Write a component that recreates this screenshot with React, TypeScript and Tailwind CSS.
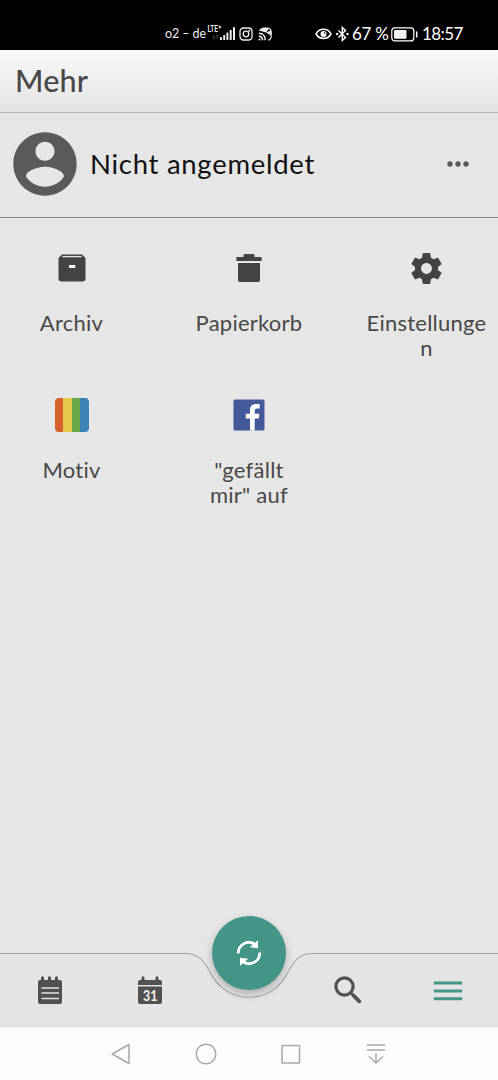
import type { ReactNode } from 'react';

function Cell({ icon, label }: { icon: ReactNode; label: string }) {
  return (
    <div className="flex h-[147px] flex-col items-center">
      <div className="flex h-[40px] w-full items-center justify-center">{icon}</div>
      <div className="mt-[22px] w-full text-center text-[22px] leading-[25px] tracking-[0.25px] break-words whitespace-pre-line text-[#484848]">{label}</div>
    </div>
  );
}

function StatusBar() {
  return (
    <div className="flex h-[50px] w-full items-center bg-black pt-[18px] pl-[165px] text-[#ececec]">
      <span className="w-[42px] text-[12.5px] leading-[30px] tracking-[-0.1px] whitespace-nowrap">o2 – de</span>
      <svg width="29" height="18" viewBox="0 0 29 18" className="-mt-[2px]" fill="#ececec">
        <text x="0.5" y="8.2" fontSize="9.500" fontWeight="700" textLength="10.5" lengthAdjust="spacingAndGlyphs">LTE</text>
        <path d="M11.400 3h3M12.900 1.500v3" stroke="#ececec" strokeWidth="1" />
        <path d="M7 11v4l-1-1.400M10 15v-4l1 1.400" stroke="#555" strokeWidth="0.800" fill="none" />
        <rect x="13" y="13" width="2" height="3" rx="0.600" />
        <rect x="16.200" y="11" width="2" height="5" rx="0.600" />
        <rect x="19.400" y="8.500" width="2" height="7.500" rx="0.600" />
        <rect x="22.700" y="6" width="2" height="10" rx="0.600" />
        <rect x="26" y="3" width="2" height="13" rx="0.600" />
      </svg>
      <svg width="14" height="14" viewBox="0 0 14 14" className="ml-[3px]" fill="none" stroke="#ececec" strokeWidth="1.300">
        <rect x="1" y="1" width="12" height="12" rx="3.400" />
        <circle cx="7" cy="7" r="2.800" />
        <circle cx="10.300" cy="3.800" r="0.400" />
      </svg>
      <svg width="14" height="14" viewBox="0 0 14 14" className="ml-[5px]">
        <path d="M4.500 1H9c3 0 4.200 1.500 4.200 4v4c0 2.200-1.200 3.800-3.200 4.100" stroke="#ececec" strokeWidth="1.200" fill="none" />
        <path d="M1 3.600Q2 1 4.500.9L11.500.9 8 5.400zM8 5.400L13 3.200V8.600z" fill="#ececec" />
        <path d="M.8 6.300c4 0 6.500 2.800 6.500 6.900M.8 9.300c2.400 0 3.800 1.500 3.800 3.900" fill="none" stroke="#ececec" strokeWidth="1.600" />
        <circle cx="1.500" cy="12.500" r="1" fill="#ececec" />
      </svg>
      <svg width="17" height="14" viewBox="0 0 17 14" className="ml-[43px]" fill="none" stroke="#fff" strokeWidth="1.500">
        <path d="M1 7C4.500.8 12.500.8 16 7 12.500 13 4.500 13 1 7z" />
        <circle cx="8.500" cy="7" r="3" fill="#fff" stroke="none" />
        <circle cx="9.500" cy="6" r="0.800" fill="#000" stroke="none" />
      </svg>
      <svg width="13" height="16" viewBox="0 0 13 16" className="ml-[4px]" fill="none" stroke="#fff" strokeWidth="1.400">
        <path d="M2.500 4.500l7 7-3.200 3V1.500l3.200 3-7 7" />
        <circle cx="1.200" cy="8" r="0.500" fill="#fff" />
        <circle cx="11.500" cy="8" r="0.500" fill="#fff" />
      </svg>
      <span className="ml-[3px] w-[38px] text-[17px] leading-[30px] tracking-[-0.3px] whitespace-nowrap text-white">67 %</span>
      <svg width="28" height="15" viewBox="0 0 28 15" className="ml-px">
        <rect x="0.800" y="0.900" width="22" height="13" rx="3" fill="none" stroke="#fff" strokeWidth="1.200" />
        <rect x="3" y="3" width="12.500" height="8.800" rx="1" fill="#f2f2f2" />
        <path d="M25.700 4.500v6" stroke="#fff" strokeWidth="1.500" />
      </svg>
      <span className="ml-[3px] text-[17px] leading-[30px] tracking-[-0.6px] whitespace-nowrap text-white">18:57</span>
    </div>
  );
}

const ArchiveIcon = () => (
  <svg width="28" height="28" viewBox="0 0 28 28">
    <path d="M4 .5h20L27.500 4v20.500a3 3 0 0 1-3 3h-21a3 3 0 0 1-3-3V4z" fill="#434343" />
    <path d="M5 2h18l1.300 1.300H3.700z" fill="#e7e7e7" />
    <rect x="11" y="11" width="6.200" height="3" fill="#fff" />
  </svg>
);

const TrashIcon = () => (
  <svg width="26" height="30" viewBox="0 0 26 30" fill="#434343">
    <path d="M1 4h6.500V2q0-1 1-1h9q1 0 1 1v2H25q.6 0 .6.600V8H.4V4.600Q.4 4 1 4z" />
    <path d="M2 10h22v17q0 2-2 2H4q-2 0-2-2z" />
  </svg>
);

const GearIcon = () => (
  <svg width="37" height="37" viewBox="0 0 24 24" fill="#434343">
    <path d="M19.430 12.980c.04-.32.07-.64.07-.98s-.03-.66-.07-.98l2.110-1.650c.19-.15.24-.42.12-.64l-2-3.460c-.12-.22-.39-.3-.61-.22l-2.490 1c-.52-.4-1.080-.73-1.690-.98l-.38-2.650C14.460 2.180 14.250 2 14 2h-4c-.25 0-.46.18-.49.42l-.38 2.650c-.61.25-1.170.59-1.690.98l-2.490-1c-.23-.09-.49 0-.61.22l-2 3.460c-.13.22-.07.49.12.64l2.110 1.650c-.04.32-.07.65-.07.98s.03.66.07.98l-2.110 1.650c-.19.15-.24.42-.12.64l2 3.460c.12.22.39.3.61.22l2.490-1c.52.4 1.080.73 1.690.98l.38 2.650c.03.24.24.42.49.42h4c.25 0 .46-.18.49-.42l.38-2.650c.61-.25 1.170-.59 1.690-.98l2.490 1c.23.09.49 0 .61-.22l2-3.460c.12-.22.07-.49-.12-.64l-2.110-1.650zM12 15.500c-1.930 0-3.500-1.570-3.500-3.500s1.570-3.500 3.500-3.500 3.500 1.570 3.500 3.500-1.570 3.500-3.500 3.500z" />
  </svg>
);

const ThemeIcon = () => (
  <div className="flex h-[34px] w-[34px] overflow-hidden rounded-[4px]">
    <div className="flex-1 bg-[#d5602c]" />
    <div className="flex-1 bg-[#e6ca4c]" />
    <div className="flex-1 bg-[#68a84a]" />
    <div className="flex-1 bg-[#3b82b6]" />
  </div>
);

const FacebookIcon = () => (
  <svg width="32" height="32" viewBox="0 0 32 32">
    <rect x="0.500" y="0.500" width="31" height="31" rx="1.500" fill="#43599a" />
    <path d="M17 31.500V19.500h-4.200v-4.700H17v-3.600c0-4 2.300-6.200 5.900-6.200 1.500 0 2.600.1 3.800.3v4.200h-2.500c-2 0-2.500 1-2.500 2.500v2.800h4.700l-.6 4.700h-4.100v12z" fill="#fff" />
  </svg>
);

function BottomBar() {
  return (
    <div className="relative h-[112px] w-full shrink-0">
      <svg width="498" height="112" viewBox="0 0 498 112" className="absolute inset-0">
        <path d="M-2 38.500H185C199 38.500 204 46 210 57 218 73 232 82.300 249 82.300S280 73 288 57C294 46 299 38.500 313 38.500H500V114H-2z" fill="#e4e4e4" stroke="#a4a4a4" strokeWidth="1.100" />
      </svg>
      <div className="relative grid h-full grid-cols-5">
        <div className="flex justify-center pt-[61px]">
          <svg width="26" height="28" viewBox="0 0 26 28" fill="#515151">
            <path d="M3 4h1V1.800a1.500 1.500 0 0 1 3 0V4h4V1.800a1.500 1.500 0 0 1 3 0V4h4V1.800a1.500 1.500 0 0 1 3 0V4h2q2 0 2 2v20q0 2-2 2H3q-2 0-2-2V6q0-2 2-2z" />
            <path d="M4.500 12h17.500M4.500 17h17.500M4.500 22.500h17.500" stroke="#e4e4e4" strokeWidth="1.700" />
          </svg>
        </div>
        <div className="flex justify-center pt-[61px] pl-px">
          <svg width="26" height="28" viewBox="0 0 26 28" fill="#515151">
            <path d="M3 4h1.500V1.800a1.500 1.500 0 0 1 3 0V4h11V1.800a1.500 1.500 0 0 1 3 0V4H23q2 0 2 2v3H1V6q0-2 2-2zM1 10.500h24V26q0 2-2 2H3q-2 0-2-2z" />
            <text x="6" y="24.500" fontSize="14.500" fontWeight="700" textLength="14.500" lengthAdjust="spacingAndGlyphs" fill="#f0f0f0">31</text>
          </svg>
        </div>
        <div className="flex justify-center pt-px">
          <div className="flex h-[74px] w-[74px] shrink-0 items-center justify-center rounded-full bg-[#429587] shadow-[0_4px_8px_rgba(0,0,0,0.25)]">
            <svg width="26" height="28" viewBox="0 0 26 28" fill="none" stroke="#fff" strokeWidth="2.800">
              <path d="M2.300 14.500A10.600 10.600 0 0 1 18.500 5M23.700 13.500A10.600 10.600 0 0 1 7.500 23" />
              <path d="M22 1.200V9.300L13.800 8.300zM4 26.800V18.700l8.200 1z" fill="#fff" stroke="none" />
            </svg>
          </div>
        </div>
        <div className="flex justify-center pt-[61px]">
          <svg width="28" height="28" viewBox="0 0 28 28" fill="none" stroke="#515151" className="-ml-px">
            <circle cx="10.500" cy="10.500" r="8.600" strokeWidth="3.200" />
            <path d="M16.500 16.500l1.500 1.500" strokeWidth="3" />
            <path d="M19 19l6.300 6.300" strokeWidth="3.800" strokeLinecap="round" />
          </svg>
        </div>
        <div className="flex justify-center pt-[66px]">
          <svg width="30" height="20" viewBox="0 0 30 20" stroke="#429587" strokeWidth="3">
            <path d="M.8 2.100h28.400M.8 9.900h28.400M.8 17.700h28.400" />
          </svg>
        </div>
      </div>
    </div>
  );
}

function SystemNav() {
  return (
    <div className="flex h-[53px] shrink-0 items-center justify-between border-t border-[#f2f2f2] bg-[#fcfcfb] pr-[111px] pl-[110px]">
      <svg width="22" height="22" viewBox="0 0 22 22" fill="none" stroke="#a9a9a9" strokeWidth="1.500" strokeLinejoin="round">
        <path d="M2.200 11L19 1.500v19z" />
      </svg>
      <svg width="22" height="22" viewBox="0 0 22 22" fill="none" stroke="#a9a9a9" strokeWidth="1.500">
        <circle cx="11" cy="11" r="9.800" />
      </svg>
      <svg width="22" height="22" viewBox="0 0 22 22" fill="none" stroke="#a9a9a9" strokeWidth="1.500">
        <rect x="2" y="2.500" width="17.500" height="17.500" rx="0.500" />
      </svg>
      <svg width="22" height="22" viewBox="0 0 22 22" fill="none" stroke="#a9a9a9" strokeWidth="1.500">
        <path d="M2 2h18M2 7h18M11 10.500v9.500M4 13.500l7 6.500 7-6.500" />
      </svg>
    </div>
  );
}

export default function App() {
  return (
    <div className="flex h-[1080px] w-[498px] flex-col overflow-hidden bg-[#e6e6e6] font-['Lato','Liberation_Sans',sans-serif]">
      <StatusBar />
      <header className="flex h-[63px] shrink-0 items-center border-b border-[#b8b8b8] bg-linear-to-b from-[#f9f9f9] to-[#e3e3e3] pl-[15px] text-[30.5px] font-medium text-[#484848]">
        <h1 className="-mt-px tracking-[0.2px]">Mehr</h1>
      </header>
      <section className="flex h-[105px] shrink-0 items-center border-b border-[#858585] pl-[7px]">
        <svg width="76" height="76" viewBox="0 0 24 24" fill="#5a5a5a" className="-mt-[2px] shrink-0">
          <path d="M12 2C6.480 2 2 6.480 2 12s4.480 10 10 10 10-4.480 10-10S17.520 2 12 2zm0 3c1.660 0 3 1.340 3 3s-1.340 3-3 3-3-1.340-3-3 1.340-3 3-3zm0 14.200c-2.500 0-4.710-1.280-6-3.220.03-1.990 4-3.080 6-3.080 1.990 0 5.970 1.090 6 3.080-1.290 1.940-3.500 3.220-6 3.220z" />
        </svg>
        <span className="-mt-[2px] ml-[7px] flex-1 text-[27.5px] tracking-[0.72px] whitespace-nowrap text-[#111]">Nicht angemeldet</span>
        <svg width="22" height="6" viewBox="0 0 22 6" fill="#585858" className="mr-[29px] -mt-[2px]">
          <circle cx="3" cy="3" r="2.700" />
          <circle cx="11" cy="3" r="2.700" />
          <circle cx="19" cy="3" r="2.700" />
        </svg>
      </section>
      <main className="grid flex-1 grid-cols-[125px_125px_125px] content-start justify-between px-[9px] pt-[30px]">
        <Cell icon={<ArchiveIcon />} label="Archiv" />
        <Cell icon={<TrashIcon />} label="Papierkorb" />
        <Cell icon={<GearIcon />} label="Einstellungen" />
        <Cell icon={<ThemeIcon />} label="Motiv" />
        <Cell icon={<FacebookIcon />} label={'"gefällt\nmir" auf'} />
      </main>
      <BottomBar />
      <SystemNav />
    </div>
  );
}
